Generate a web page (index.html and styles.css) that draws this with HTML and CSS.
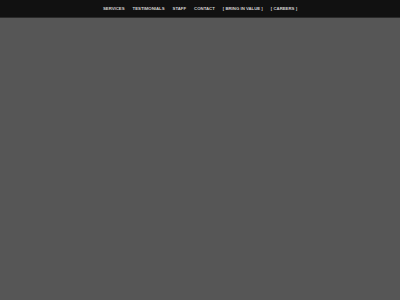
FILE: index.html
```html
<!DOCTYPE html>
<html lang="en">
<head>
    <meta charset="UTF-8">
    <meta name="viewport" content="width=device-width, initial-scale=1.0">
    <title>Home</title>
    <link rel="stylesheet" href="styles.css">
</head>
<body>

    <header class="topbar">
        <nav class="menu">
            <a href="#services">SERVICES</a>
            <a href="#testimonials">TESTIMONIALS</a>
            <a href="#staff">STAFF</a>
            <a href="#contact">CONTACT</a>
            <a href="#value">[ BRING IN VALUE ]</a>
            <a href="#careers">[ CAREERS ]</a>
        </nav>
    </header>

    <main class="hero"></main>

</body>
</html>
```

FILE: styles.css
```css
html, body {
    height: 100%;
}

body {
    margin: 0;
    font-family: "Liberation Sans", Arial, sans-serif;
    background-color: #555555;
    display: flex;
    flex-direction: column;
}

.topbar {
    height: 17px;
    background-color: #111111;
    border-bottom: 1px solid #2a2a2a;
    display: flex;
    justify-content: center;
    align-items: center;
}

.menu {
    display: flex;
    gap: 8px;
}

.menu a {
    color: #d0d0d0;
    text-decoration: none;
    font-size: 4.3px;
    font-weight: bold;
}

.hero {
    flex: 1;
    background-color: #565656;
}
```
